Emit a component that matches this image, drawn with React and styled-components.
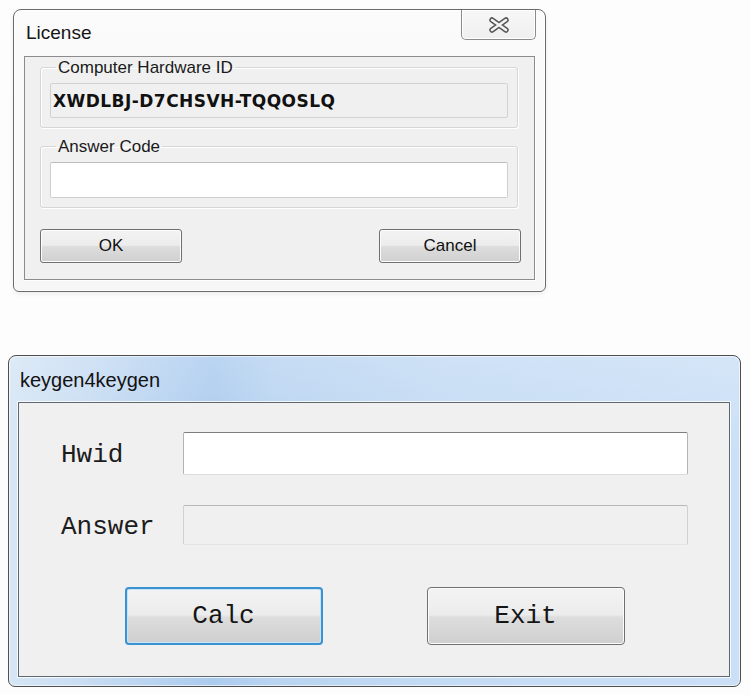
import React from 'react'
import styled, { createGlobalStyle } from 'styled-components'

const GlobalStyle = createGlobalStyle`
	html, body {
		margin: 0;
		padding: 0;
		background: #fdfdfd;
	}
	* {
		box-sizing: border-box;
	}
`

const Page = styled.div`
	display: flex;
	flex-direction: column;
	align-items: flex-start;
	padding-top: 9px;
	width: 751px;
	height: 695px;
	font-family: 'Liberation Sans', Arial, sans-serif;
	color: #111;
`

/* ---------- License dialog ---------- */

const LicenseFrame = styled.div`
	margin-left: 13px;
	width: 533px;
	border: 1px solid #6a6a6a;
	border-radius: 8px 8px 6px 6px;
	background: linear-gradient(180deg, #fbfbfb 0%, #f6f6f6 100%);
	padding: 0 10px 11px 10px;
	box-shadow: 0 0 0 1px rgba(255,255,255,0.9) inset, 0 2px 5px rgba(0,0,0,0.07);
`

const LicenseTitleBar = styled.div`
	display: flex;
	justify-content: space-between;
	align-items: flex-start;
	height: 46px;
`

const LicenseTitle = styled.span`
	padding: 12px 0 0 2px;
	font-size: 19px;
	line-height: 22px;
	color: #151515;
`

const CloseButton = styled.div`
	display: flex;
	align-items: center;
	justify-content: center;
	width: 75px;
	height: 30px;
	margin-right: -1px;
	border: 1px solid #8a8a8a;
	border-top: none;
	border-radius: 0 0 5px 5px;
	background: linear-gradient(180deg, #f7f7f7 0%, #efefef 100%);
	box-shadow: 0 0 0 1px #fff inset;
`

const LicenseClient = styled.div`
	display: flex;
	flex-direction: column;
	border: 1px solid #8c8c8c;
	background: #f0f0f0;
	padding: 1px 13px 16px 15px;
	box-shadow: 1px 1px 0 #fff;
`

const Group = styled.fieldset`
	margin: ${p => p.$top || 0}px 3px 0 0;
	padding: 0 9px 9px 9px;
	border: 1px solid #d6d6d6;
	border-radius: 3px;
	box-shadow: 1px 1px 0 #fff inset, 1px 1px 0 #fff;
	min-width: 0;
`

const Legend = styled.legend`
	margin-left: 6px;
	padding: 0 2px;
	font-size: 17px;
	line-height: 19px;
	color: #1a1a1a;
`

const IdField = styled.input`
	display: block;
	width: 100%;
	height: 35px;
	margin-top: 6px;
	padding: 0 2px;
	border: 1px solid #d2d2d2;
	border-radius: 2px;
	background: #f0f0f0;
	font-family: 'DejaVu Sans', sans-serif;
	font-weight: bold;
	font-size: 17px;
	letter-spacing: 0.45px;
	color: #111;
	outline: none;
`

const CodeField = styled.input`
	display: block;
	width: 100%;
	height: 36px;
	margin-top: 6px;
	border: 1px solid #cfcfcf;
	border-top-color: #bdbdbd;
	border-radius: 2px;
	background: #fff;
	outline: none;
`

const DialogButtons = styled.div`
	display: flex;
	justify-content: space-between;
	margin-top: 21px;
`

const DialogButton = styled.button`
	width: 142px;
	height: 34px;
	padding: 0;
	border: 1px solid #707070;
	border-radius: 3px;
	background: linear-gradient(180deg, #f3f3f3 0%, #ececec 48%, #dddddd 52%, #d0d0d0 100%);
	box-shadow: 0 0 0 1px #fcfcfc inset;
	font-family: 'Liberation Sans', Arial, sans-serif;
	font-size: 17px;
	color: #111;
`

const CloseGlyph = () => (
	<svg width="22" height="16" viewBox="0 0 22 16">
		<path d="M4 3 L18 13 M18 3 L4 13" stroke="#555" strokeWidth="5.5" strokeLinecap="round" fill="none" />
		<path d="M4 3 L18 13 M18 3 L4 13" stroke="#f2f2f2" strokeWidth="2.6" strokeLinecap="round" fill="none" />
	</svg>
)

/* ---------- keygen window ---------- */

const KeygenFrame = styled.div`
	margin: 63px 0 0 8px;
	width: 733px;
	border: 1px solid #4e4e4e;
	border-radius: 8px 8px 7px 7px;
	padding: 0 10px 9px 9px;
	background:
		linear-gradient(180deg, rgba(255,255,255,0.18) 0%, rgba(255,255,255,0) 30%),
		linear-gradient(90deg, #d6e6f5 0%, #c9ddf3 10%, #abcbee 28%, #b9d4f1 36%, #c4dbf4 60%, #cbe0f6 100%);
	box-shadow: 0 0 0 1px rgba(255,255,255,0.6) inset;
`

const KeygenTitle = styled.div`
	height: 46px;
	padding: 13px 0 0 2px;
	font-size: 20px;
	line-height: 22px;
	color: #121212;
`

const KeygenClient = styled.div`
	border: 1px solid #5f6770;
	background: #f0f0f0;
	padding: 29px 41px 31px 42px;
	box-shadow: 0 0 0 1px rgba(255,255,255,0.8);
`

const FormGrid = styled.div`
	display: grid;
	grid-template-columns: 122px 1fr;
	row-gap: 30px;
	align-items: center;
`

const MonoLabel = styled.span`
	font-family: 'Liberation Mono', 'Courier New', monospace;
	font-size: 26px;
	color: #1c1c1c;
	padding-top: 3px;
`

const KeyInput = styled.input`
	display: block;
	width: 100%;
	height: ${p => p.$h}px;
	border: 1px solid ${p => (p.disabled ? '#d0d0d0' : '#b4b4b4')};
	border-top-color: ${p => (p.disabled ? '#b8b8b8' : '#7d7d7d')};
	border-bottom-color: ${p => (p.disabled ? '#e4e4e4' : '#dcdcdc')};
	border-radius: 2px;
	background: ${p => (p.disabled ? '#f0f0f0' : '#fff')};
	outline: none;
`

const KeyButtons = styled.div`
	display: flex;
	justify-content: center;
	gap: 104px;
	margin-top: 42px;
`

const KeyButton = styled.button`
	width: 198px;
	height: 58px;
	padding: 0;
	border: ${p => (p.$focused ? '2px solid #3a92d2' : '1px solid #707070')};
	border-radius: 4px;
	background: linear-gradient(180deg, #f3f3f3 0%, #ececec 48%, #dddddd 52%, #cfcfcf 100%);
	box-shadow: 0 0 0 1px ${p => (p.$focused ? '#c6e6f8' : '#fcfcfc')} inset;
	font-family: 'Liberation Mono', 'Courier New', monospace;
	font-size: 26px;
	color: #151515;
`

export default function App() {
	return (
		<Page>
			<GlobalStyle />
			<LicenseFrame>
				<LicenseTitleBar>
					<LicenseTitle>License</LicenseTitle>
					<CloseButton>
						<CloseGlyph />
					</CloseButton>
				</LicenseTitleBar>
				<LicenseClient>
					<Group>
						<Legend>Computer Hardware ID</Legend>
						<IdField readOnly value="XWDLBJ-D7CHSVH-TQQOSLQ" />
					</Group>
					<Group $top={9}>
						<Legend>Answer Code</Legend>
						<CodeField readOnly value="" />
					</Group>
					<DialogButtons>
						<DialogButton>OK</DialogButton>
						<DialogButton>Cancel</DialogButton>
					</DialogButtons>
				</LicenseClient>
			</LicenseFrame>

			<KeygenFrame>
				<KeygenTitle>keygen4keygen</KeygenTitle>
				<KeygenClient>
					<FormGrid>
						<MonoLabel>Hwid</MonoLabel>
						<KeyInput $h={43} readOnly value="" />
						<MonoLabel>Answer</MonoLabel>
						<KeyInput $h={40} disabled value="" />
					</FormGrid>
					<KeyButtons>
						<KeyButton $focused>Calc</KeyButton>
						<KeyButton>Exit</KeyButton>
					</KeyButtons>
				</KeygenClient>
			</KeygenFrame>
		</Page>
	)
}
